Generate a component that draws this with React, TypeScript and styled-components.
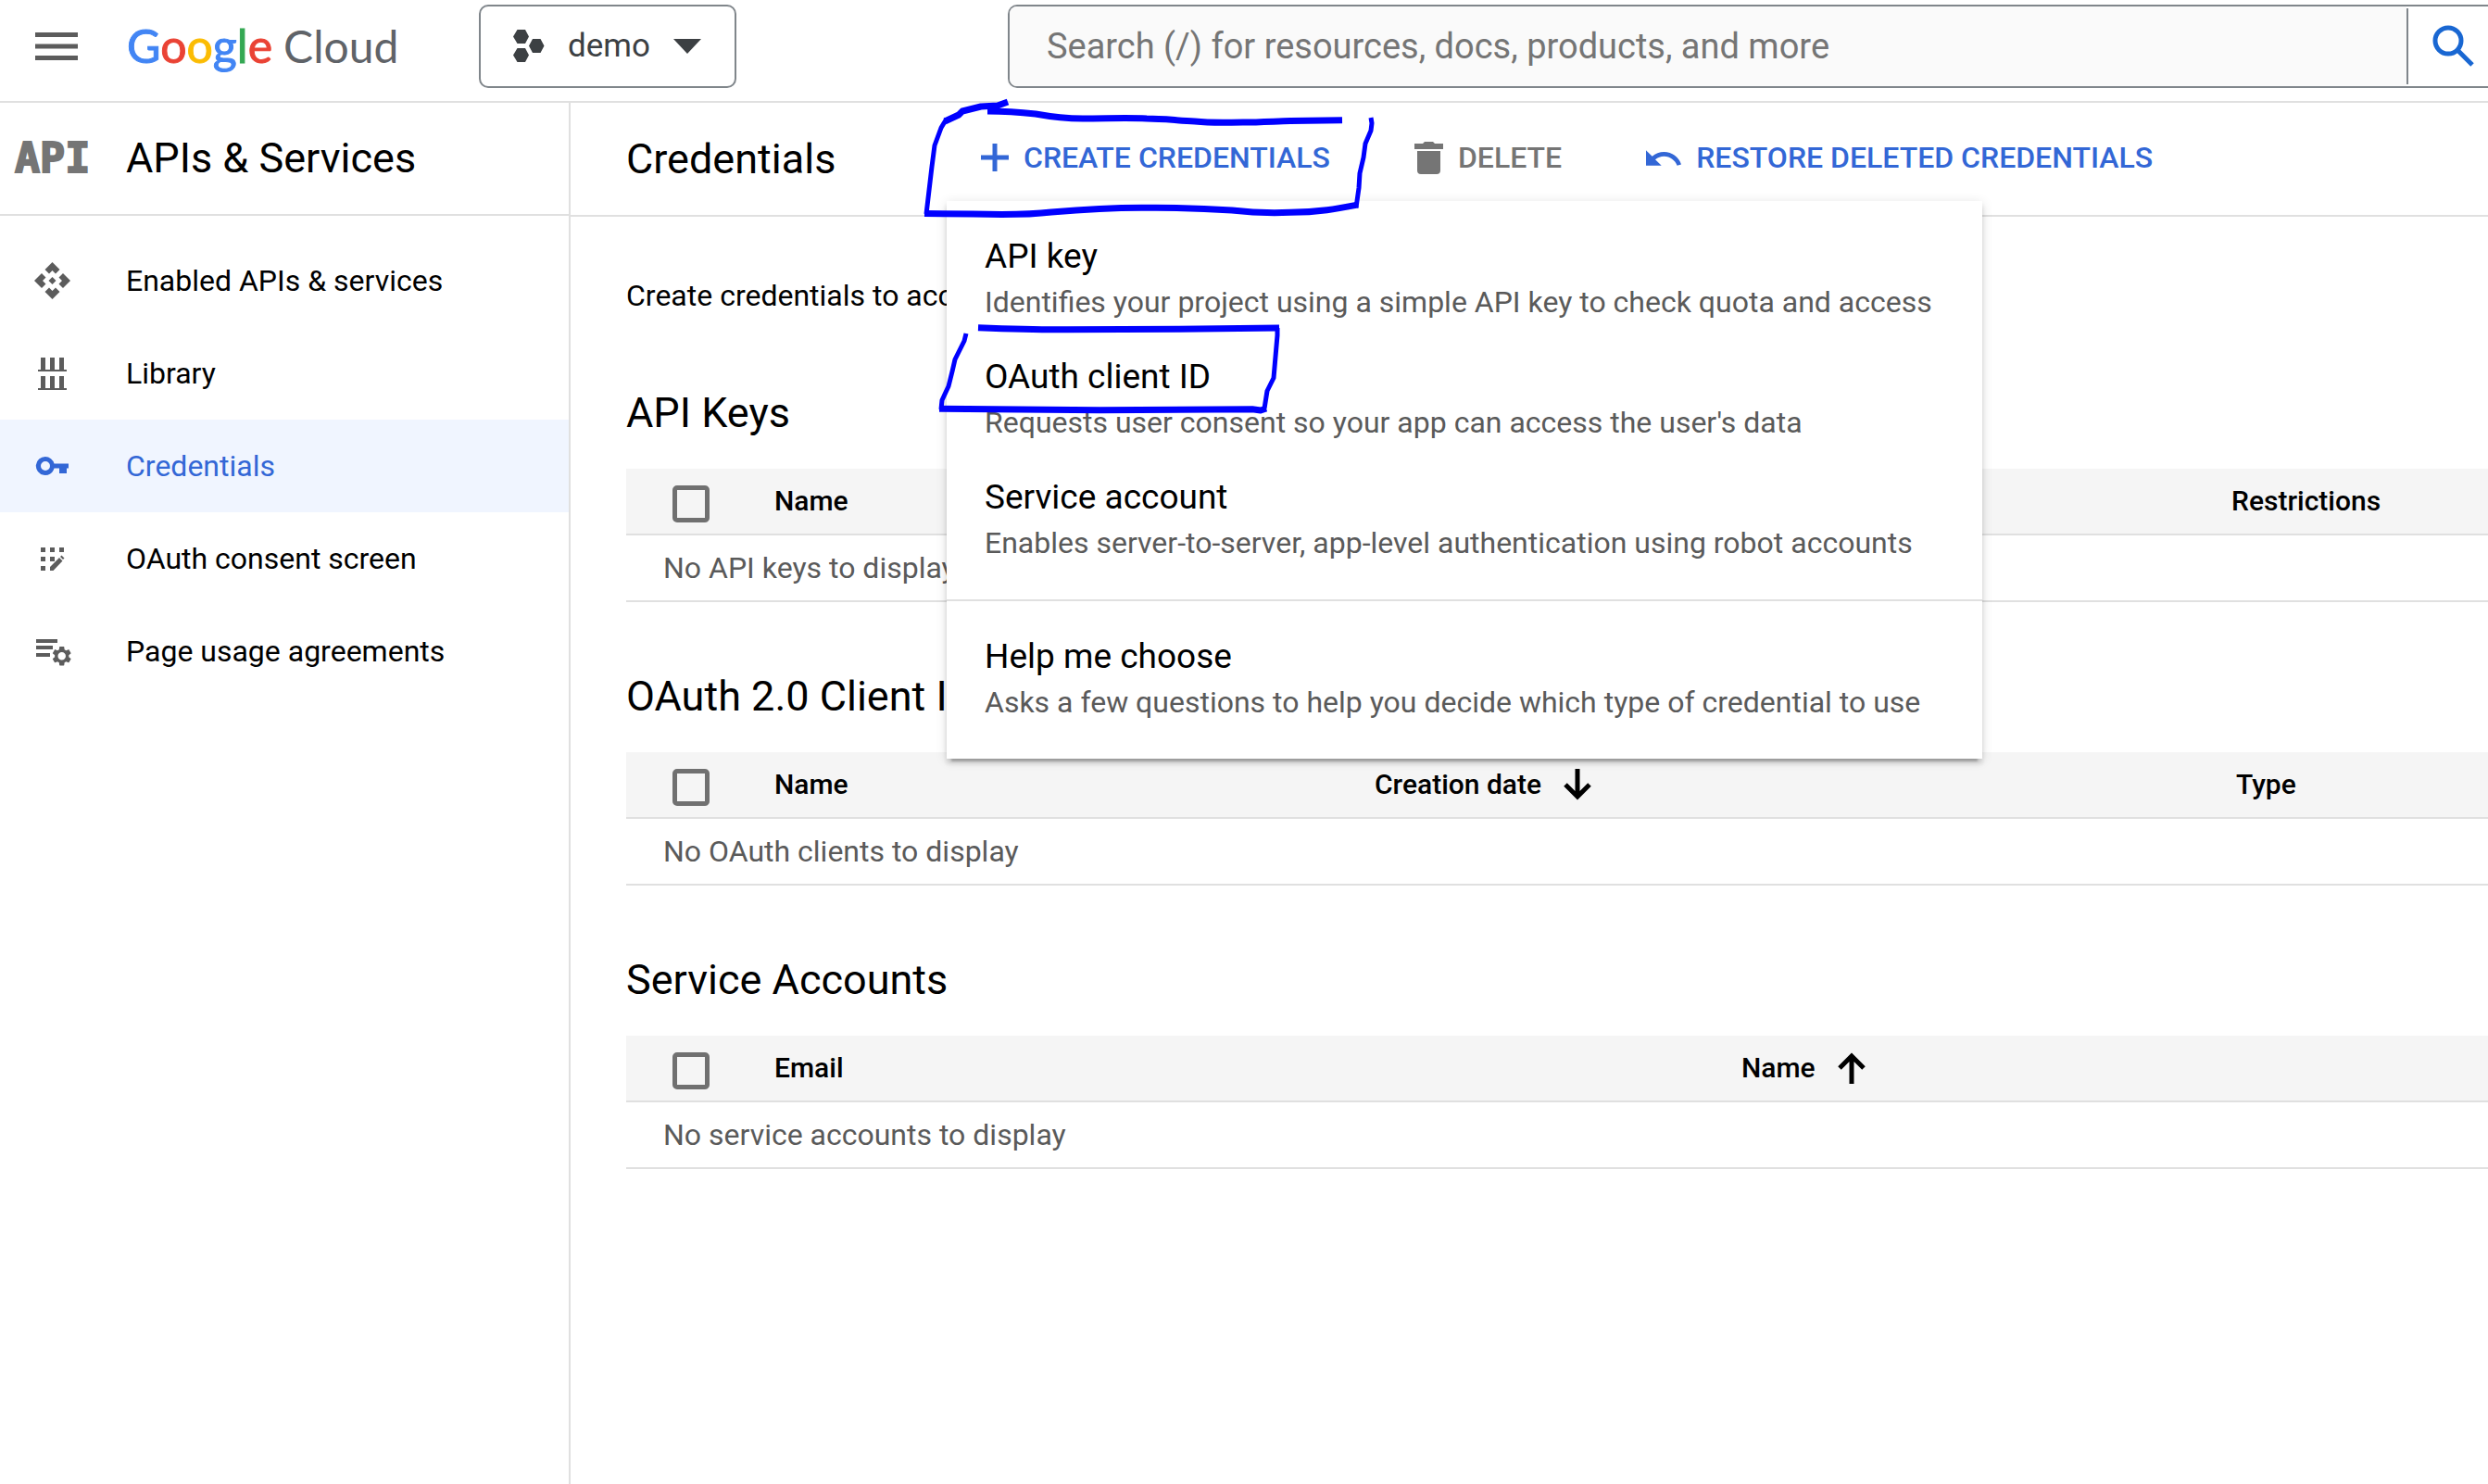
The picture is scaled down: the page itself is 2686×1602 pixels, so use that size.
import React from "react";
import styled, { createGlobalStyle, css } from "styled-components";

const colors = {
  text: "#000000",
  muted: "#5a5a5a",
  icon: "#5c5c5c",
  disabled: "#757575",
  blue: "#3367d6",
  line: "#e0e0e0",
  outline: "#80868b",
  ink: "#3c4043",
};

const GlobalStyle = createGlobalStyle`
  *, *::before, *::after { box-sizing: border-box; }
  body {
    margin: 0;
    background: #fff;
    color: ${colors.text};
    font-family: Roboto, "Liberation Sans", sans-serif;
    font-size: 32px;
    line-height: 50px;
  }
  button, input { font: inherit; }
  h1, h2, p, ul { margin: 0; padding: 0; font-weight: 400; }
`;

const Page = styled.div`
  position: relative;
  display: flex;
  flex-direction: column;
  min-height: 100vh;
  overflow: hidden;
`;

const TopBar = styled.header`
  display: flex;
  align-items: center;
  padding: 5px 0 14px 31px;
  border-bottom: 2px solid ${colors.line};
`;

const IconButton = styled.button`
  display: flex;
  align-items: center;
  justify-content: center;
  width: 60px;
  height: 60px;
  padding: 0;
  border: 0;
  background: none;
`;

const Logo = styled.a`
  display: flex;
  align-items: baseline;
  gap: 12px;
  width: 380px;
  margin-left: 46px;
  padding-bottom: 2px;
  font-family: Lato, "Open Sans", sans-serif;
  font-size: 48px;
  line-height: 60px;
  color: #5f6368;
  text-decoration: none;
  white-space: nowrap;
`;

const LogoName = styled.span`
  font-size: 50px;
  -webkit-text-stroke: 1px currentColor;
`;

const LogoLetter = styled.span<{ $color: string }>`
  color: ${(p) => p.$color};
  -webkit-text-stroke-color: ${(p) => p.$color};
`;

const ProjectPicker = styled.button`
  display: flex;
  align-items: center;
  height: 90px;
  padding: 0 36px 0 35px;
  border: 2px solid ${colors.outline};
  border-radius: 10px;
  background: #fff;
  color: ${colors.ink};
  font-size: 35px;
  gap: 25px;
`;

const SearchForm = styled.form`
  flex: 1;
  display: flex;
  height: 90px;
  margin-left: 293px;
  border: 2px solid ${colors.outline};
  border-right: 0;
  border-radius: 10px 0 0 10px;
  overflow: hidden;
`;

const SearchInput = styled.input`
  flex: 1;
  min-width: 0;
  padding: 0 40px;
  border: 0;
  background: #fafafa;
  font-size: 38px;
  color: ${colors.text};
  &::placeholder {
    color: ${colors.disabled};
    opacity: 1;
  }
`;

const SearchButton = styled.button`
  width: 88px;
  margin: 2px 0;
  padding: 0 0 0 26px;
  border: 0;
  border-left: 2px solid ${colors.outline};
  background: #fff;
  text-align: left;
  svg { display: block; }
`;

const Body = styled.div`
  flex: 1;
  display: flex;
`;

const Sidebar = styled.nav`
  flex: none;
  width: 616px;
  border-right: 2px solid ${colors.line};
`;

const SidebarHeader = styled.div`
  display: flex;
  align-items: center;
  height: 122px;
  padding-left: 16px;
  border-bottom: 2px solid ${colors.line};
`;

const ApiMark = styled.span`
  width: 120px;
  font-family: "DejaVu Sans Mono", monospace;
  font-weight: 700;
  font-size: 45px;
  color: ${colors.disabled};
  -webkit-text-stroke: 2px currentColor;
`;

const Title = styled.h1`
  font-size: 45px;
  line-height: 60px;
  white-space: nowrap;
`;

const NavList = styled.ul`
  padding-top: 20px;
  list-style: none;
`;

const NavLink = styled.a<{ $active?: boolean }>`
  display: flex;
  align-items: center;
  gap: 56px;
  height: 100px;
  padding: 0 0 1px 32px;
  color: ${colors.text};
  text-decoration: none;
  svg { color: ${colors.icon}; }
  ${(p) =>
    p.$active &&
    css`
      background: #f0f5ff;
      color: ${colors.blue};
      svg { color: ${colors.blue}; }
    `}
`;

const Main = styled.main`
  flex: 1;
  min-width: 0;
`;

const Toolbar = styled.div`
  display: flex;
  align-items: center;
  height: 123px;
  padding-left: 60px;
  border-bottom: 2px solid ${colors.line};
`;

const PageTitle = styled(Title)`
  width: 346px;
`;

const Actions = styled.div`
  position: relative;
  display: flex;
  gap: 17px;
`;

const Action = styled.button`
  display: flex;
  align-items: center;
  gap: 16px;
  height: 80px;
  padding: 0 37px 3px;
  border: 0;
  background: none;
  color: ${colors.blue};
  font-weight: 500;
  white-space: nowrap;
  &:disabled { color: ${colors.disabled}; }
`;

const Menu = styled.div`
  position: absolute;
  z-index: 2;
  top: 85px;
  left: 0;
  min-width: 1118px;
  background: #fff;
  box-shadow: 0 8px 2px -5px rgba(0, 0, 0, 0.2), 0 5px 5px 0 rgba(0, 0, 0, 0.14),
    0 2px 12px 0 rgba(0, 0, 0, 0.12);
`;

const MenuGroup = styled.div`
  padding: 20px 0;
  & + & { border-top: 2px solid ${colors.line}; }
`;

const MenuItem = styled.button`
  display: block;
  width: 100%;
  padding: 15px 41px 17px;
  border: 0;
  background: none;
  text-align: left;
  white-space: nowrap;
`;

const MenuTitle = styled.span`
  display: block;
  font-size: 37px;
  line-height: 50px;
  color: ${colors.text};
`;

const MenuText = styled.span`
  display: block;
  line-height: 48px;
  color: ${colors.muted};
`;

const Content = styled.div`
  display: flex;
  flex-direction: column;
  gap: 72px;
  padding: 60px 0 60px 60px;
`;

const SectionTitle = styled.h2`
  margin-bottom: 30px;
  font-size: 45px;
  line-height: 60px;
`;

const Table = styled.table`
  width: 100%;
  table-layout: fixed;
  border-collapse: separate;
  border-spacing: 0;
`;

const cell = css`
  height: 72px;
  padding: 0;
  border-bottom: 2px solid ${colors.line};
  text-align: left;
`;

const HeadCell = styled.th<{ $width?: number }>`
  ${cell}
  width: ${(p) => (p.$width ? `${p.$width}px` : "auto")};
  background: #f5f5f5;
  font-size: 30px;
  font-weight: 500;
  line-height: 40px;
`;

const SelectCell = styled.td`
  ${cell}
  width: 160px;
  padding: 0 0 12px 50px;
  background: #f5f5f5;
  vertical-align: bottom;
`;

const EmptyCell = styled.td`
  ${cell}
  padding-left: 40px;
  color: ${colors.muted};
`;

const Sortable = styled.span`
  display: flex;
  align-items: center;
  gap: 24px;
`;

const Checkbox = styled.input`
  display: block;
  appearance: none;
  width: 40px;
  height: 40px;
  margin: 0;
  border: 5px solid #707070;
  border-radius: 5px;
`;

const Ink = styled.svg`
  position: absolute;
  z-index: 3;
  top: 0;
  left: 0;
  pointer-events: none;
`;

const MenuIcon = () => (
  <svg width="46" height="30" viewBox="0 0 46 30" fill={colors.icon} aria-hidden="true">
    <path d="M0 0h46v5H0zM0 12.5h46v5H0zM0 25h46v5H0z" />
  </svg>
);

const ProjectIcon = () => (
  <svg width="34" height="36" viewBox="0 0 34 36" fill="currentColor" aria-hidden="true">
    <path d="M4.500 0h8.500l4 7.500-4 7.500H4.500l-4.500-7.500zM21 10h8.500l4 7.500-4 7.500H21l-4-7.500zM4.500 20h8.500l4 7.500-4 7.500H4.500L0 27.500z" />
  </svg>
);

const CaretIcon = () => (
  <svg width="30" height="16" viewBox="0 0 30 16" fill="currentColor" aria-hidden="true">
    <path d="M0 0h30L15 16z" />
  </svg>
);

const SearchIcon = () => (
  <svg width="46" height="46" viewBox="0 0 46 46" fill="none" stroke="#1967d2" aria-hidden="true">
    <circle cx="17" cy="17" r="14" strokeWidth="5" />
    <path d="M27 27l16 16" strokeWidth="5" />
  </svg>
);

const ApisIcon = () => (
  <svg width="48" height="48" viewBox="0 0 48 48" fill="currentColor" aria-hidden="true">
    <path d="M24.500 4l8 8-4.500 4.500-3.500-3.500-3.500 3.500-4.500-4.500zM24.500 44l8-8-4.500-4.500-3.500 3.500-3.500-3.500-4.500 4.500zM5 24l8-8 4.500 4.500L14 24l3.500 3.500L13 32zM44 24l-8-8-4.500 4.500L35 24l-3.500 3.500L36 32zM24.500 20l4 4-4 4-4-4z" />
  </svg>
);

const LibraryIcon = () => (
  <svg width="48" height="48" viewBox="0 0 48 48" fill="currentColor" aria-hidden="true">
    <path d="M9 20h3V7h5v13h5V7h5v13h5V7h5v13h3v2H9zM9 40h3V27h5v13h5V27h5v13h5V27h5v13h3v2H9z" />
  </svg>
);

const KeyIcon = () => (
  <svg width="48" height="48" viewBox="0 0 48 48" fill="currentColor" aria-hidden="true">
    <path
      fillRule="evenodd"
      d="M17 14a10 10 0 0 1 9.500 7.500H42v5h-2V32h-8v-5.500h-5.500A10 10 0 1 1 17 14zm0 5a5 5 0 1 0 0 10 5 5 0 0 0 0-10z"
    />
  </svg>
);

const ConsentIcon = () => (
  <svg width="48" height="48" viewBox="0 0 48 48" fill="currentColor" aria-hidden="true">
    <path d="M12 12h5v5h-5zM22 12h5v5h-5zM32 12h5v5h-5zM12 22h5v5h-5zM22 22h5v5h-5zM12 32h5v5h-5z" />
    <path d="M22 37v-4l10-10 3.500 3.500L25.500 37zM33 22l1.500-1.500 3 3L36 25z" />
  </svg>
);

const AgreementsIcon = () => (
  <svg width="48" height="48" viewBox="0 0 48 48" fill="currentColor" aria-hidden="true">
    <path d="M7 11h23v4H7zM7 18h18v4H7zM7 26h15v4H7z" />
    <path
      transform="translate(22 16.500) scale(1.060)"
      d="M19.140 12.940c.04-.3.06-.61.06-.94 0-.32-.02-.64-.07-.94l2.030-1.580c.18-.14.23-.41.12-.61l-1.920-3.320c-.12-.22-.37-.29-.59-.22l-2.390.96c-.5-.38-1.030-.7-1.620-.94l-.36-2.540c-.04-.24-.24-.41-.48-.41h-3.840c-.24 0-.43.17-.47.41l-.36 2.540c-.59.24-1.130.57-1.620.94l-2.390-.96c-.22-.08-.47 0-.59.22L2.740 8.870c-.12.21-.08.47.12.61l2.030 1.580c-.05.3-.09.63-.09.94s.02.64.07.94l-2.030 1.580c-.18.14-.23.41-.12.61l1.920 3.320c.12.22.37.29.59.22l2.390-.96c.5.38 1.030.7 1.620.94l.36 2.540c.05.24.24.41.48.41h3.840c.24 0 .44-.17.47-.41l.36-2.540c.59-.24 1.130-.56 1.620-.94l2.390.96c.22.08.47 0 .59-.22l1.920-3.320c.12-.22.07-.47-.12-.61l-2.010-1.580zM12 16c-2.200 0-4-1.800-4-4s1.800-4 4-4 4 1.800 4 4-1.800 4-4 4z"
    />
  </svg>
);

const PlusIcon = () => (
  <svg width="30" height="30" viewBox="0 0 30 30" fill="currentColor" aria-hidden="true">
    <path d="M12.500 0h5v12.500H30v5H17.500V30h-5V17.500H0v-5h12.500z" />
  </svg>
);

const TrashIcon = () => (
  <svg width="31" height="35" viewBox="0 0 31 35" fill="currentColor" aria-hidden="true">
    <path d="M9 2l2-2h9l2 2h9v6H0V2zM3 10h25v21a4 4 0 0 1-4 4H7a4 4 0 0 1-4-4z" />
  </svg>
);

const UndoIcon = () => (
  <svg width="38" height="17" viewBox="2 7 20.470 9" fill="currentColor" aria-hidden="true">
    <path d="M12.500 8c-2.650 0-5.050.99-6.900 2.600L2 7v9h9l-3.620-3.620c1.390-1.160 3.160-1.880 5.120-1.880 3.540 0 6.550 2.310 7.600 5.500l2.370-.78C21.080 11.030 17.150 8 12.500 8z" />
  </svg>
);

const SortArrow = ({ up = false }: { up?: boolean }) => (
  <svg width="30" height="34" viewBox="0 0 30 34" fill="none" stroke="currentColor" strokeWidth="5" aria-hidden="true">
    <path d={up ? "M15 34V4M2 17L15 4l13 13" : "M15 0v30M2 17l13 13 13-13"} />
  </svg>
);

const logoLetters = [
  ["G", "#4285f4"],
  ["o", "#ea4335"],
  ["o", "#fbbc04"],
  ["g", "#4285f4"],
  ["l", "#34a853"],
  ["e", "#ea4335"],
];

const navItems = [
  { label: "Enabled APIs & services", icon: <ApisIcon /> },
  { label: "Library", icon: <LibraryIcon /> },
  { label: "Credentials", icon: <KeyIcon />, active: true },
  { label: "OAuth consent screen", icon: <ConsentIcon /> },
  { label: "Page usage agreements", icon: <AgreementsIcon /> },
];

const menuGroups = [
  [
    ["API key", "Identifies your project using a simple API key to check quota and access"],
    ["OAuth client ID", "Requests user consent so your app can access the user's data"],
    ["Service account", "Enables server-to-server, app-level authentication using robot accounts"],
  ],
  [["Help me choose", "Asks a few questions to help you decide which type of credential to use"]],
];

type Column = { label: string; width?: number; sort?: "up" | "down" };

const sections: { title: string; empty: string; columns: Column[] }[] = [
  {
    title: "API Keys",
    empty: "No API keys to display",
    columns: [{ label: "Name", width: 1573 }, { label: "Restrictions" }],
  },
  {
    title: "OAuth 2.0 Client IDs",
    empty: "No OAuth clients to display",
    columns: [
      { label: "Name", width: 648 },
      { label: "Creation date", width: 930, sort: "down" },
      { label: "Type" },
    ],
  },
  {
    title: "Service Accounts",
    empty: "No service accounts to display",
    columns: [{ label: "Email", width: 1044 }, { label: "Name", sort: "up" }],
  },
];

const CredentialSection = ({ title, empty, columns }: (typeof sections)[number]) => (
  <section>
    <SectionTitle>{title}</SectionTitle>
    <Table>
      <thead>
        <tr>
          <SelectCell>
            <Checkbox type="checkbox" aria-label={`Select all ${title}`} />
          </SelectCell>
          {columns.map((column) => (
            <HeadCell key={column.label} $width={column.width} scope="col">
              <Sortable>
                {column.label}
                {column.sort && <SortArrow up={column.sort === "up"} />}
              </Sortable>
            </HeadCell>
          ))}
        </tr>
      </thead>
      <tbody>
        <tr>
          <EmptyCell colSpan={columns.length + 1}>{empty}</EmptyCell>
        </tr>
      </tbody>
    </Table>
  </section>
);

const PenMarks = () => (
  <Ink width="1500" height="460" viewBox="0 0 1500 460" fill="none" stroke="#0000ff" strokeLinejoin="round" aria-hidden="true">
    <g strokeWidth="7">
      <path d="M1088 110L1077 114L1059 115L1039 120L1035 124L1020 131" />
      <path d="M1066 120C1085 120 1100 121 1118 123C1140 127 1155 128 1169 128C1195 128 1215 127 1238 128C1255 128 1270 130 1290 131C1310 133 1325 132 1342 132C1360 132 1375 131 1393 130.500L1449 129.700" />
      <path d="M998 230.500L1050 231C1085 232 1110 232 1135 229C1170 226 1200 224 1238 224.300C1275 224 1300 225 1330 227C1355 230 1375 230 1393 229.300C1425 229 1445 225 1466 221" />
      <path d="M1056 353.700C1090 355 1120 356 1152 355.700L1273 355.300L1381 354" />
      <path d="M1014 441.300L1187 442.700L1352 441.700L1361 443L1367 441" />
    </g>
    <g strokeWidth="5">
      <path d="M1022 128L1016 138L1009 157L1006 180L1000 231" />
      <path d="M1464 224L1467 203L1468 187L1472 170L1474 155L1480 141L1481 133L1480 127" />
      <path d="M1379 354L1379 362L1377 385L1375 408L1368 422L1365 441" />
      <path d="M1043 360L1041 368L1031 388L1028 401L1024 417L1017 432L1016 442" />
    </g>
  </Ink>
);

export default function App() {
  return (
    <>
      <GlobalStyle />
      <Page>
        <TopBar>
          <IconButton type="button" aria-label="Navigation menu">
            <MenuIcon />
          </IconButton>
          <Logo href="#">
            <LogoName>
              {logoLetters.map(([letter, color], index) => (
                <LogoLetter key={index} $color={color}>
                  {letter}
                </LogoLetter>
              ))}
            </LogoName>
            Cloud
          </Logo>
          <ProjectPicker type="button">
            <ProjectIcon />
            demo
            <CaretIcon />
          </ProjectPicker>
          <SearchForm role="search">
            <SearchInput
              type="search"
              aria-label="Search"
              placeholder="Search (/) for resources, docs, products, and more"
            />
            <SearchButton type="submit" aria-label="Search">
              <SearchIcon />
            </SearchButton>
          </SearchForm>
        </TopBar>
        <Body>
          <Sidebar aria-label="APIs & Services">
            <SidebarHeader>
              <ApiMark aria-hidden="true">API</ApiMark>
              <Title as="h2">APIs &amp; Services</Title>
            </SidebarHeader>
            <NavList>
              {navItems.map((item) => (
                <li key={item.label}>
                  <NavLink href="#" $active={item.active}>
                    {item.icon}
                    {item.label}
                  </NavLink>
                </li>
              ))}
            </NavList>
          </Sidebar>
          <Main>
            <Toolbar>
              <PageTitle>Credentials</PageTitle>
              <Actions>
                <Action type="button" aria-haspopup="menu" aria-expanded="true">
                  <PlusIcon />
                  CREATE CREDENTIALS
                </Action>
                <Action type="button" disabled>
                  <TrashIcon />
                  DELETE
                </Action>
                <Action type="button">
                  <UndoIcon />
                  RESTORE DELETED CREDENTIALS
                </Action>
                <Menu role="menu">
                  {menuGroups.map((group, index) => (
                    <MenuGroup key={index}>
                      {group.map(([title, text]) => (
                        <MenuItem key={title} type="button" role="menuitem">
                          <MenuTitle>{title}</MenuTitle>
                          <MenuText>{text}</MenuText>
                        </MenuItem>
                      ))}
                    </MenuGroup>
                  ))}
                </Menu>
              </Actions>
            </Toolbar>
            <Content>
              <p>Create credentials to access your enabled APIs.</p>
              {sections.map((section) => (
                <CredentialSection key={section.title} {...section} />
              ))}
            </Content>
          </Main>
        </Body>
        <PenMarks />
      </Page>
    </>
  );
}
